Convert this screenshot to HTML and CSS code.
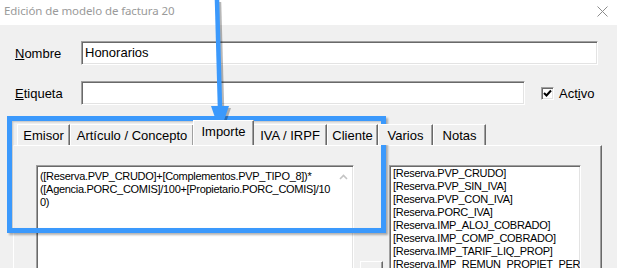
FILE: index.html
```html
<!DOCTYPE html>
<html lang="es">
<head>
<meta charset="utf-8">
<title>Edición de modelo de factura 20</title>
<link rel="stylesheet" href="styles.css">
</head>
<body>
<div class="dialog">
  <div class="titlebar">
    <span class="title">Edición de modelo de factura 20</span>
    <svg class="close" width="11" height="11" viewBox="0 0 11 11"><path d="M0.5 0.5 L10.5 10.5 M10.5 0.5 L0.5 10.5" stroke="#8c8c8c" stroke-width="1" fill="none"/></svg>
  </div>
  <div class="content">
    <div class="form-row">
      <label class="label"><u>N</u>ombre</label>
      <div class="field field-name">Honorarios</div>
    </div>
    <div class="form-row">
      <label class="label"><u>E</u>tiqueta</label>
      <div class="field field-tag"></div>
      <div class="check">
        <span class="box"><svg width="9" height="9" viewBox="0 0 9 9"><path d="M1 4 L3.5 6.5 L8 1.5" stroke="#000" stroke-width="2" fill="none"/></svg></span>
        <span class="check-label">Act<u>i</u>vo</span>
      </div>
    </div>
    <div class="tabs">
      <div class="tab tab-emisor">Emisor</div>
      <div class="tab tab-articulo">Artículo / Concepto</div>
      <div class="tab tab-importe active">Importe</div>
      <div class="tab tab-iva">IVA / IRPF</div>
      <div class="tab tab-cliente">Cliente</div>
      <div class="tab tab-varios">Varios</div>
      <div class="tab tab-notas">Notas</div>
    </div>
    <div class="panel">
      <div class="editor">
        <div class="editor-text">([Reserva.PVP_CRUDO]+[Complementos.PVP_TIPO_8])*<br>([Agencia.PORC_COMIS]/100+[Propietario.PORC_COMIS]/10<br>0)</div>
        <div class="scrollbar"><svg width="9" height="6" viewBox="0 0 9 6"><path d="M1 5 L4.5 1.5 L8 5" stroke="#c4c4c4" stroke-width="1.6" fill="none"/></svg></div>
      </div>
      <div class="buttons">
        <div class="mini-btn"></div>
      </div>
      <div class="listbox">
        <div class="item">[Reserva.PVP_CRUDO]</div>
        <div class="item">[Reserva.PVP_SIN_IVA]</div>
        <div class="item">[Reserva.PVP_CON_IVA]</div>
        <div class="item">[Reserva.PORC_IVA]</div>
        <div class="item">[Reserva.IMP_ALOJ_COBRADO]</div>
        <div class="item">[Reserva.IMP_COMP_COBRADO]</div>
        <div class="item">[Reserva.IMP_TARIF_LIQ_PROP]</div>
        <div class="item">[Reserva.IMP_REMUN_PROPIET_PER</div>
      </div>
    </div>
  </div>
  <div class="highlight"></div>
  <svg class="arrow" width="240" height="140" viewBox="0 0 240 140">
    <g fill="#000" stroke="#000" opacity="0.28">
      <path d="M219 2 L222 110" stroke-width="4.5" fill="none"/>
      <polygon points="213,108 231,108 222,134" stroke="none"/>
    </g>
    <g fill="#3b99fc" stroke="#3b99fc">
      <path d="M217 0 L220 108" stroke-width="4.5" fill="none"/>
      <polygon points="211,106 229,106 220,132" stroke="none"/>
    </g>
  </svg>
</div>
</body>
</html>
```
FILE: styles.css
```css
* { box-sizing: border-box; }
html, body { margin: 0; padding: 0; }
body {
  width: 617px;
  height: 268px;
  overflow: hidden;
  background: #f0f0f0;
  font-family: "Liberation Sans", Arial, sans-serif;
  font-size: 13px;
  color: #000;
}
.dialog { position: relative; width: 617px; height: 268px; overflow: hidden; }
.titlebar {
  height: 25px;
  background: #fff;
  display: flex;
  align-items: center;
  justify-content: space-between;
  padding: 0 9px 4px 4px;
}
.title {
  font-family: "Noto Sans", "Open Sans", sans-serif;
  font-size: 11.5px;
  color: #9a9a9a;
  letter-spacing: -0.1px;
}
.close { margin-top: 2px; }
.content { padding: 16px 0 0 0; }
.form-row {
  display: flex;
  align-items: center;
  height: 24px;
  margin-bottom: 16px;
}
.label { width: 81px; padding-left: 15px; }
.field {
  height: 24px;
  background: #fff;
  border: 1px solid;
  border-color: #a0a0a0 #fff #fff #a0a0a0;
  box-shadow: inset 1px 1px 0 #696969, inset -1px -1px 0 #e3e3e3;
  padding: 3px 0 0 3px;
  line-height: 16px;
}
.field-name { width: 517px; }
.field-tag { width: 444px; }
.check { display: flex; align-items: center; margin-left: 16px; }
.box {
  width: 13px; height: 13px;
  background: #fff;
  border: 1px solid;
  border-color: #a0a0a0 #fff #fff #a0a0a0;
  box-shadow: inset 1px 1px 0 #696969, inset -1px -1px 0 #e3e3e3;
  display: flex; align-items: center; justify-content: center;
  padding-top: 1px;
}
.check-label { margin-left: 5px; }
.tabs {
  display: flex;
  align-items: flex-end;
  height: 25px;
  margin-top: -1px;
  padding-left: 17px;
  position: relative;
  z-index: 1;
}
.tab {
  height: 21px;
  border-top: 1px solid #fff;
  border-left: 1px solid #fff;
  border-right: 1px solid #696969;
  box-shadow: inset -1px 0 0 #a0a0a0;
  background: #f0f0f0;
  text-align: center;
  padding-top: 3px;
  line-height: 16px;
  white-space: nowrap;
}
.tab-emisor { width: 53px; }
.tab-articulo { width: 124px; }
.tab-importe { width: 60px; }
.tab-iva { width: 74px; }
.tab-cliente { width: 51px; }
.tab-varios { width: 55px; }
.tab-notas { width: 53px; }
.tab.active {
  height: 25px;
  margin: 0 -1px 0 -1px;
  padding-top: 3px;
  position: relative;
  z-index: 2;
}
.tab-importe.active { width: 61px; }
.panel {
  display: flex;
  align-items: flex-start;
  margin: 0 15px 0 13px;
  height: 140px;
  border-top: 1px solid #fff;
  border-left: 1px solid #fff;
  border-right: 1px solid #696969;
  box-shadow: inset -1px 0 0 #a0a0a0;
  padding: 19px 0 0 22px;
}
.editor {
  width: 318px;
  height: 130px;
  background: #fff;
  border: 1px solid;
  border-color: #a0a0a0 #fff #fff #a0a0a0;
  box-shadow: inset 1px 1px 0 #696969, inset -1px -1px 0 #e3e3e3;
  display: flex;
  justify-content: space-between;
  padding: 2px 1px 0 3px;
}
.editor-text, .item {
  font-size: 11px;
  letter-spacing: -0.3px;
  line-height: 13px;
  white-space: nowrap;
}
.editor-text { padding-top: 2px; }
.scrollbar {
  width: 17px;
  height: 100%;
  background: #fff;
  display: flex;
  justify-content: center;
  padding-top: 6px;
}
.buttons { width: 35px; padding: 96px 0 0 6px; }
.mini-btn {
  width: 23px; height: 22px;
  border-top: 1px solid #fff;
  border-left: 1px solid #fff;
  border-right: 1px solid #696969;
  box-shadow: inset -1px 0 0 #a0a0a0;
  background: #f0f0f0;
}
.listbox {
  width: 192px;
  height: 130px;
  background: #fff;
  border: 1px solid;
  border-color: #a0a0a0 #fff #fff #a0a0a0;
  box-shadow: inset 1px 1px 0 #696969, inset -1px -1px 0 #e3e3e3;
  padding: 1px 0 0 3px;
  overflow: hidden;
}
.highlight {
  position: absolute;
  left: 7px;
  top: 116px;
  width: 379px;
  height: 117px;
  border: 5px solid #3b99fc;
  box-shadow: 2px 2px 2px rgba(0,0,0,0.3), inset 1px 1px 2px rgba(0,0,0,0.2);
}
.arrow { position: absolute; left: 0; top: 0; }
```
